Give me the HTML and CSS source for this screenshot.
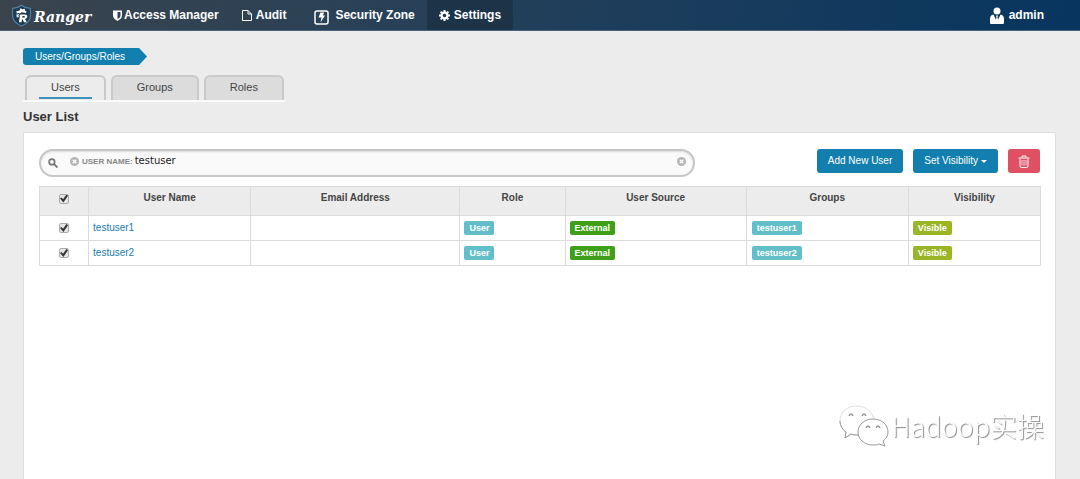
FILE: index.html
```html
<!DOCTYPE html>
<html lang="en">
<head>
<meta charset="utf-8">
<title>Ranger</title>
<link rel="stylesheet" href="styles.css">
</head>
<body>
<header class="topbar">
  <a class="brand" href="#">
    <svg class="brand-mark" viewBox="0 0 40 44" aria-hidden="true">
      <path d="M20 2C15 6 9 8 3 8v14c0 9 7 16 17 20 10-4 17-11 17-20V8C31 8 25 6 20 2z" fill="#1d3c53" stroke="#5688a8" stroke-width="2"/>
      <path d="M10 14l6-1 2-5 4 2 4-1 1 4 3 2-2 2-8-1-3 2-2-1-4 1z" fill="#fff"/>
      <path d="M10 20l6-1-2 4 2 2-5 1z" fill="#d5e5ee"/>
      <path d="M18 20h9c5 0 6 6 1 8l-1 1 3 6h-5l-3-6h-1l-1 6h-5l2-12h-1zM22 23l-1 3h4c2 0 2-3 0-3z" fill="#fff" fill-rule="evenodd"/>
    </svg>
    <span class="brand-name">Ranger</span>
  </a>
  <nav class="nav">
    <a class="nav-item nav-tight" href="#">
      <svg width="9" height="11" viewBox="0 0 18 22" aria-hidden="true"><path d="M0 1h18v10c0 5-4 8-9 11-5-3-9-6-9-11zM9 4v14c4-2 6-4 6-7V4z" fill="#fff" fill-rule="evenodd"/></svg>
      <span>Access Manager</span>
    </a>
    <a class="nav-item" href="#">
      <svg width="10" height="11" viewBox="0 0 20 22" aria-hidden="true"><path d="M1 1h11l7 7v13H1zM12 1v7h7" fill="none" stroke="#fff" stroke-width="2"/></svg>
      <span>Audit</span>
    </a>
    <a class="nav-item nav-zone" href="#">
      <svg class="zone-icon" width="15" height="15" viewBox="0 0 30 30" aria-hidden="true"><rect x="2" y="2" width="26" height="26" rx="4" fill="none" stroke="#fff" stroke-width="3"/><path d="M13 5h7l-2 6h4l-9 14 2-10H9z" fill="#fff"/></svg>
      <span>Security Zone</span>
    </a>
    <a class="nav-item active" href="#">
      <svg width="11" height="11" viewBox="0 0 22 22" aria-hidden="true"><g fill="#fff"><rect x="9" width="4" height="22"/><rect x="9" width="4" height="22" transform="rotate(45 11 11)"/><rect x="9" width="4" height="22" transform="rotate(90 11 11)"/><rect x="9" width="4" height="22" transform="rotate(135 11 11)"/><circle cx="11" cy="11" r="8"/></g><circle cx="11" cy="11" r="3.5" fill="#1c3348"/></svg>
      <span>Settings</span>
    </a>
  </nav>
  <a class="account" href="#">
    <svg width="14" height="17" viewBox="0 0 28 34" aria-hidden="true"><circle cx="14" cy="8" r="7" fill="#fff"/><path d="M7 15c-5 1-7 4-7 10v6c0 2 1 3 3 3h22c2 0 3-1 3-3v-6c0-6-2-9-7-10l-7 15z" fill="#fff"/><path d="M12 17h4l-1 4 2 7-3 4-3-4 2-7z" fill="#fff"/></svg>
    <span>admin</span>
  </a>
</header>

<main class="page">
  <ul class="crumbs"><li class="crumb">Users/Groups/Roles</li></ul>
  <nav class="tabs">
    <a class="tab current" href="#"><span>Users</span></a>
    <a class="tab" href="#"><span>Groups</span></a>
    <a class="tab" href="#"><span>Roles</span></a>
  </nav>
  <h1 class="title">User List</h1>

  <section class="panel">
    <div class="toolbar">
      <div class="search">
        <svg class="search-icon" width="10" height="10" viewBox="0 0 18 18" aria-hidden="true"><circle cx="7" cy="7" r="5" fill="none" stroke="#777" stroke-width="3"/><path d="M11 11l6 6" stroke="#777" stroke-width="3.5"/></svg>
        <button class="clear" type="button" aria-label="Remove filter"><svg width="9" height="9" viewBox="0 0 18 18"><circle cx="9" cy="9" r="9" fill="#b5b5b5"/><path d="M5.500 5.500l7 7m0-7l-7 7" stroke="#fff" stroke-width="2.500"/></svg></button>
        <label class="facet" for="query">USER NAME:</label>
        <input class="query" id="query" type="text" value="testuser">
        <button class="clear" type="button" aria-label="Clear search"><svg width="9" height="9" viewBox="0 0 18 18"><circle cx="9" cy="9" r="9" fill="#b5b5b5"/><path d="M5.500 5.500l7 7m0-7l-7 7" stroke="#fff" stroke-width="2.500"/></svg></button>
      </div>
      <div class="actions">
        <button class="btn" type="button">Add New User</button>
        <button class="btn" type="button">Set Visibility<span class="caret"></span></button>
        <button class="btn danger" type="button" aria-label="Delete"><svg width="12" height="13" viewBox="0 0 24 26" aria-hidden="true"><path d="M1 6h22M8 5V2h8v3M4 7v15q0 3 3 3h10q3 0 3-3V7" fill="none" stroke="#fff" stroke-width="2"/><path d="M8 10v11M12 10v11M16 10v11" stroke="#fff" stroke-width="1.500"/></svg></button>
      </div>
    </div>

    <table class="grid">
      <colgroup><col class="c-check"><col class="c-name"><col class="c-email"><col class="c-role"><col class="c-source"><col class="c-groups"><col class="c-vis"></colgroup>
      <thead>
        <tr><th class="pick"><input type="checkbox" aria-label="Select all users" checked></th><th>User Name</th><th>Email Address</th><th>Role</th><th>User Source</th><th>Groups</th><th>Visibility</th></tr>
      </thead>
      <tbody>
        <tr><td class="pick"><input type="checkbox" aria-label="Select testuser1" checked></td><td><a href="#">testuser1</a></td><td></td><td><span class="label info">User</span></td><td><span class="label green">External</span></td><td class="groups"><span class="label info">testuser1</span></td><td><span class="label lime">Visible</span></td></tr>
        <tr><td class="pick"><input type="checkbox" aria-label="Select testuser2" checked></td><td><a href="#">testuser2</a></td><td></td><td><span class="label info">User</span></td><td><span class="label green">External</span></td><td class="groups"><span class="label info">testuser2</span></td><td><span class="label lime">Visible</span></td></tr>
      </tbody>
    </table>
  </section>
</main>

<div class="watermark">
  <svg width="50" height="42" viewBox="0 0 50 42" aria-hidden="true">
    <g fill="#fff" stroke="#999" stroke-width="1">
      <path d="M18 1C8 1 1 7 1 16c0 5 3 9 6 11l-1 6 6-4c2 1 4 1 7 1 9 0 16-6 16-14S27 1 18 1z" stroke="#ddd"/>
      <path d="M1 16c0 5 3 9 6 11l-1 6 6-4c2 1 4 1 7 1" fill="none"/>
      <path d="M34 14c-9 0-15 6-15 13s6 13 15 13c2 0 4 0 6-1l6 2-2-5c3-2 5-5 5-9 0-7-6-13-15-13z"/>
      <path d="M10 11q2-4 4 0M23 11q2-4 4 0M27 23q2-4 4 0M37 23q2-4 4 0" fill="none" stroke-width="1.500"/>
    </g>
  </svg>
  <span class="watermark-text">Hadoop实操</span>
</div>
</body>
</html>
```
FILE: styles.css
```css
* { box-sizing: border-box; }

body {
  margin: 0;
  min-height: 100vh;
  display: flex;
  flex-direction: column;
  background: #ececec;
  color: #444;
  font-family: "Liberation Sans", Arial, sans-serif;
  font-size: 11px;
  line-height: 16px;
}

a { color: #1a7cad; text-decoration: none; }
svg { display: block; flex: none; }

.topbar {
  display: flex;
  height: 31px;
  padding: 0 36px 0 11px;
  background: linear-gradient(100deg, #3a444d, #24405a 45%, #07355f);
  border-bottom: 1px solid #49647c;
}
.topbar a { color: #fff; }
.brand { display: flex; align-items: center; gap: 2px; width: 90px; }
.brand-mark { width: 21px; height: 23px; }
.brand-name {
  font: italic bold 14px/20px "DejaVu Serif", serif;
  padding-top: 3px;
}
.nav { display: flex; }
.nav-item {
  display: flex;
  align-items: center;
  gap: 4px;
  padding: 0 12px;
  font-size: 12px;
  font-weight: bold;
}
.nav-tight { gap: 2px; padding-right: 11px; }
.nav-zone { gap: 6px; padding-left: 16px; }
.zone-icon { margin-top: 4px; }
.nav-item.active { background: #1c3348; }
.account {
  display: flex;
  align-items: center;
  gap: 5px;
  margin-left: auto;
  font-size: 12px;
  font-weight: bold;
}

.page {
  flex: 1;
  display: flex;
  flex-direction: column;
  align-items: flex-start;
  padding: 17px 24px 0 23px;
}
.crumbs { margin: 0; padding: 0; list-style: none; }
.crumb {
  height: 17px;
  padding: 0 22px 0 12px;
  border-radius: 3px 0 0 3px;
  background: #137fae;
  color: #fff;
  font-size: 10px;
  line-height: 17px;
  clip-path: polygon(0 0, calc(100% - 8px) 0, 100% 50%, calc(100% - 8px) 100%, 0 100%);
}
.tabs {
  display: flex;
  gap: 5px;
  margin-top: 10px;
  padding: 0 1px 0 2px;
  border-bottom: 2px solid #fafafa;
}
.tab {
  height: 25px;
  padding: 0 12px;
  border: 2px solid #c9c9c9;
  border-bottom: 0;
  border-radius: 6px 6px 0 0;
  background: #dcdcdc;
  color: #444;
}
.tab span { display: block; height: 22px; padding: 2px 12px; }
.tab.current { background: #ececec; }
.tab.current span { border-bottom: 2px solid #3d93ba; }
.title { margin: 7px 0 7px; color: #333; font-size: 13px; line-height: 16px; }

.panel {
  flex: 1;
  width: 100%;
  padding: 16px 14px 20px 15px;
  border: 1px solid #dedede;
  border-bottom: 0;
  border-radius: 2px 2px 0 0;
  background: #fff;
}
.toolbar {
  display: flex;
  justify-content: space-between;
  align-items: flex-start;
  margin-bottom: 9px;
  padding-right: 1px;
}
.search {
  display: flex;
  align-items: center;
  width: 656px;
  height: 28px;
  padding: 0 8px 4px 7px;
  border: 2px solid #c6c6c6;
  border-radius: 14px;
  background: #fafafa;
  box-shadow: inset 0 1px 2px #ddd;
}
.search-icon { margin: 4px 12px 0 0; }
.clear { padding: 0; border: 0; background: none; }
.search > .clear:last-child { margin-right: -1px; }
.facet { margin: 0 2px 0 3px; padding-top: 1px; color: #888; font-size: 8px; font-weight: bold; }
.query {
  flex: 1;
  min-width: 0;
  padding: 0;
  border: 0;
  outline: 0;
  background: none;
  color: #222;
  font: 10px/16px "DejaVu Sans", sans-serif;
}
.actions { display: flex; gap: 10px; }
.btn {
  display: flex;
  align-items: center;
  height: 24px;
  padding: 0 11px;
  border: 0;
  border-radius: 3px;
  background: #137fae;
  color: #fff;
  font: 10px/16px "Liberation Sans", Arial, sans-serif;
}
.btn.danger { padding: 0 10px; background: #df5062; }
.caret {
  margin-left: 3px;
  border: 3px solid transparent;
  border-top-color: #fff;
  border-bottom: 0;
}

.grid {
  width: 100%;
  table-layout: fixed;
  border-collapse: collapse;
}
.grid th, .grid td { border: 1px solid #dcdcdc; }
.grid th {
  height: 29px;
  padding: 3px 4px 8px;
  background: #ececec;
  font-size: 10px;
  vertical-align: top;
}
.grid td { height: 25px; padding: 0 4px; font-size: 10px; }
.c-check { width: 4.9%; }
.c-name { width: 16.2%; }
.c-email { width: 20.9%; }
.c-role { width: 10.5%; }
.c-source { width: 18.1%; }
.c-groups { width: 16.2%; }
.c-vis { width: 13.2%; }
.grid .groups { padding-left: 5px; }
.grid .pick { text-align: center; vertical-align: middle; }
.grid th.pick { padding: 0 0 5px; }
.pick input {
  appearance: none;
  display: grid;
  place-items: center;
  width: 10px;
  height: 10px;
  margin: 0 auto;
  border: 1px solid #aaa;
  border-radius: 2px;
  background: #e6e6e6;
}
.pick input:checked::before {
  content: "";
  width: 8px;
  height: 8px;
  background: #333;
  clip-path: polygon(0 50%, 20% 38%, 38% 58%, 80% 0, 100% 15%, 42% 100%);
}
.label {
  display: block;
  width: fit-content;
  height: 14px;
  padding: 0 5px;
  border-radius: 2px;
  color: #fff;
  font-size: 9px;
  font-weight: bold;
  line-height: 14px;
}
.info { background: #62bfc9; }
.green { background: #3f9f18; }
.lime { background: #9ab526; }

.watermark {
  position: fixed;
  right: 36px;
  bottom: 32px;
  display: flex;
  align-items: center;
  gap: 2px;
}
.watermark-text {
  color: #fff;
  font: 300 27px/40px "Noto Sans CJK SC", sans-serif;
  text-shadow: 1px 1px 1px #888;
}
```
